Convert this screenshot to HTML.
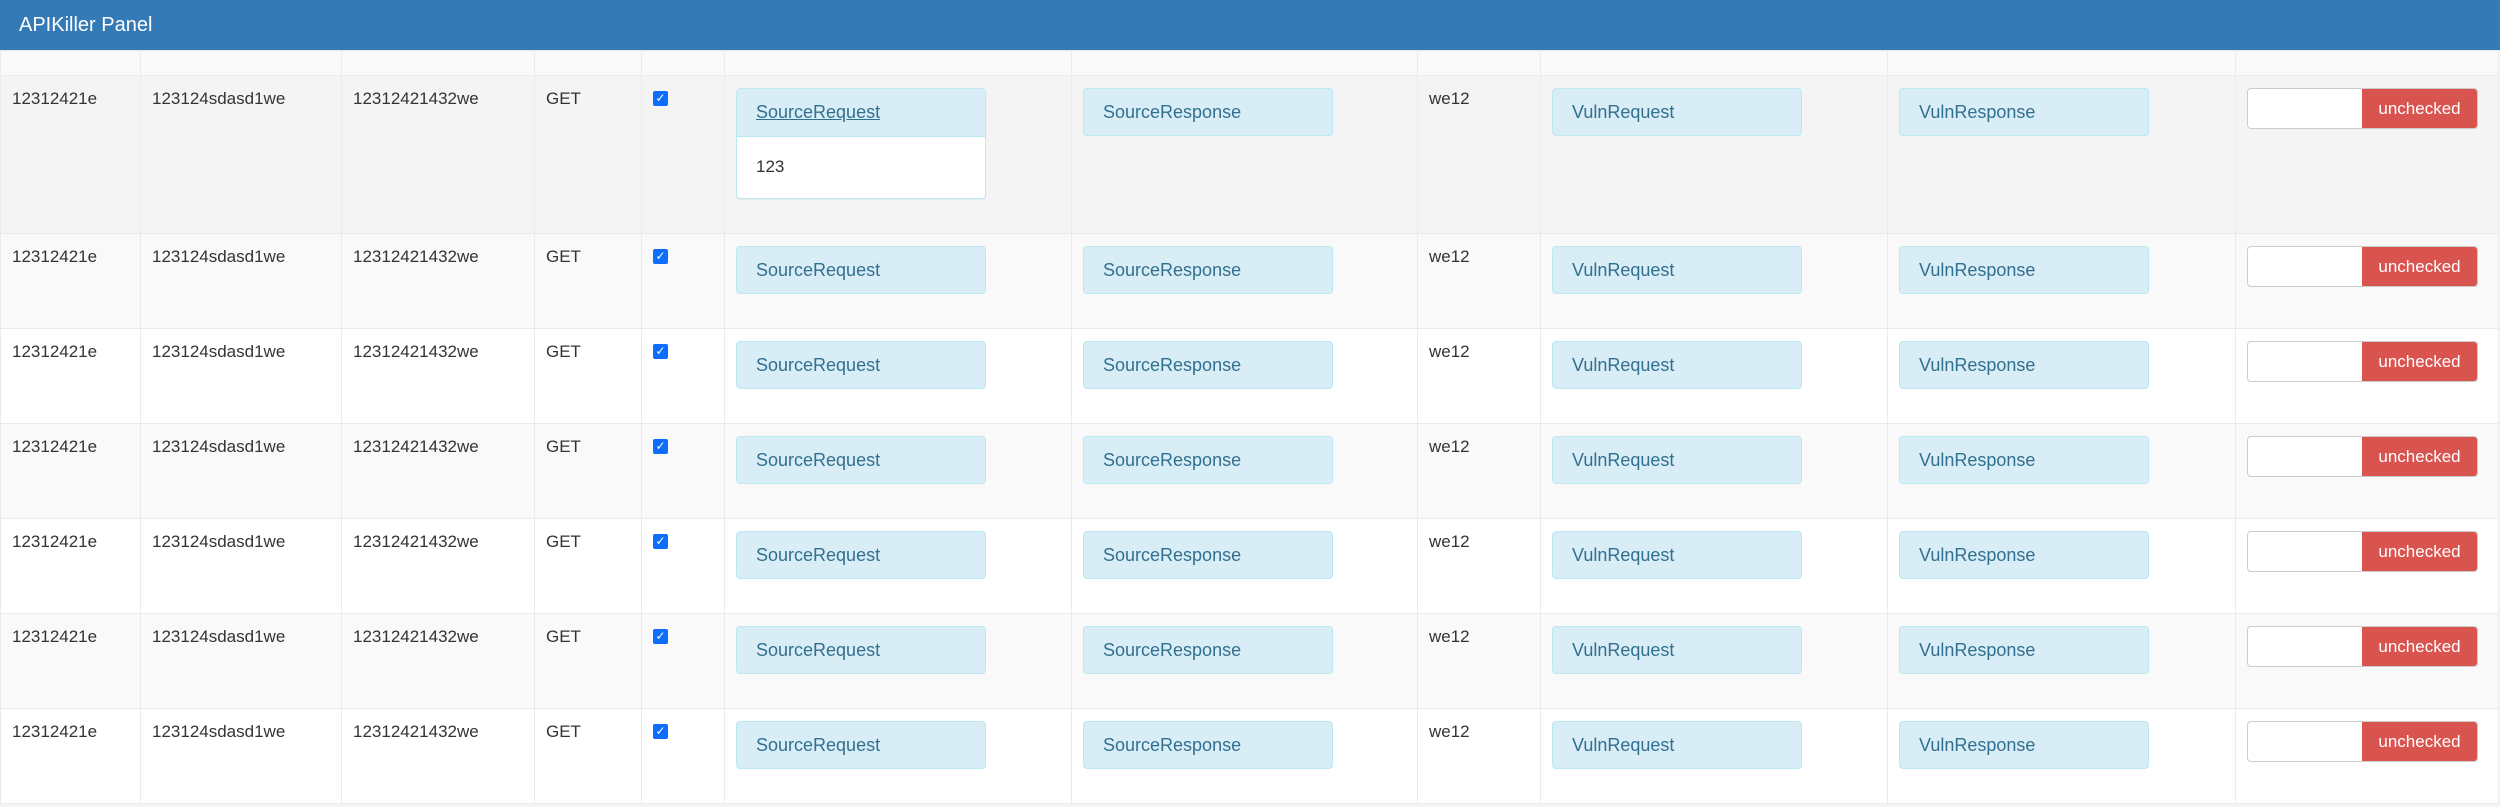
<!DOCTYPE html>
<html><head><meta charset="utf-8"><style>
*{box-sizing:border-box;margin:0;padding:0}
body{width:2500px;height:807px;overflow:hidden;background:#f5f5f5;font-family:"Liberation Sans",sans-serif;color:#333;font-size:17px}
.nav{height:50px;background:#337ab7;color:#fff;font-size:20px;line-height:50px;padding-left:19px}
table{border-collapse:collapse;table-layout:fixed;width:2498px;background:#fff}
td{border:1px solid #ebebeb;vertical-align:top;padding:13px 11px 0 11px;line-height:20px}
tr.h td{height:25px;background:#f9f9f9;padding:0}
tr.r td{height:95px}
tr.r1 td{height:158px;background:#f4f4f4}
tr.s td{background:#f9f9f9}
tr.w td{background:#fff}
td.b{padding-top:12px}
.btn{width:250px;height:48px;background:#d9edf7;border:1px solid #bce8f1;border-radius:4px;color:#31708f;line-height:46px;padding-left:19px;font-size:18px}
.pan{width:250px;border:1px solid #bce8f1;border-radius:4px;background:#fff;box-shadow:0 1px 1px rgba(0,0,0,.05)}
.pan .hd{height:48px;background:#d9edf7;border-bottom:1px solid #bce8f1;color:#31708f;line-height:46px;padding-left:19px;font-size:18px;text-decoration:underline}
.pan .bd{height:61px;line-height:60px;padding-left:19px;font-size:17px}
.cb{width:15px;height:15px;background:#0d6efd;border-radius:2px;margin-top:2px;color:#fff;font-size:12px;line-height:15px;text-align:center}
.tg{width:231px;height:41px;border:1px solid #ccc;border-radius:4px;background:#fff;position:relative;overflow:hidden}
.tg span{position:absolute;right:0;top:0;bottom:0;width:115px;background:#d9534f;color:#fff;text-align:center;line-height:39px;font-size:17px}
</style></head><body>
<div class="nav">APIKiller Panel</div>
<table>
<colgroup><col style="width:140px"><col style="width:201px"><col style="width:193px"><col style="width:107px"><col style="width:83px"><col style="width:347px"><col style="width:346px"><col style="width:123px"><col style="width:347px"><col style="width:348px"><col style="width:263px"></colgroup>
<tr class="h"><td></td><td></td><td></td><td></td><td></td><td></td><td></td><td></td><td></td><td></td><td></td></tr>
<tr class="r1"><td>12312421e</td><td>123124sdasd1we</td><td>12312421432we</td><td>GET</td><td><div class="cb">✓</div></td><td class="b"><div class="pan"><div class="hd">SourceRequest</div><div class="bd">123</div></div></td><td class="b"><div class="btn">SourceResponse</div></td><td>we12</td><td class="b"><div class="btn">VulnRequest</div></td><td class="b"><div class="btn">VulnResponse</div></td><td class="b"><div class="tg"><span>unchecked</span></div></td></tr>
<tr class="r s"><td>12312421e</td><td>123124sdasd1we</td><td>12312421432we</td><td>GET</td><td><div class="cb">✓</div></td><td class="b"><div class="btn">SourceRequest</div></td><td class="b"><div class="btn">SourceResponse</div></td><td>we12</td><td class="b"><div class="btn">VulnRequest</div></td><td class="b"><div class="btn">VulnResponse</div></td><td class="b"><div class="tg"><span>unchecked</span></div></td></tr>
<tr class="r w"><td>12312421e</td><td>123124sdasd1we</td><td>12312421432we</td><td>GET</td><td><div class="cb">✓</div></td><td class="b"><div class="btn">SourceRequest</div></td><td class="b"><div class="btn">SourceResponse</div></td><td>we12</td><td class="b"><div class="btn">VulnRequest</div></td><td class="b"><div class="btn">VulnResponse</div></td><td class="b"><div class="tg"><span>unchecked</span></div></td></tr>
<tr class="r s"><td>12312421e</td><td>123124sdasd1we</td><td>12312421432we</td><td>GET</td><td><div class="cb">✓</div></td><td class="b"><div class="btn">SourceRequest</div></td><td class="b"><div class="btn">SourceResponse</div></td><td>we12</td><td class="b"><div class="btn">VulnRequest</div></td><td class="b"><div class="btn">VulnResponse</div></td><td class="b"><div class="tg"><span>unchecked</span></div></td></tr>
<tr class="r w"><td>12312421e</td><td>123124sdasd1we</td><td>12312421432we</td><td>GET</td><td><div class="cb">✓</div></td><td class="b"><div class="btn">SourceRequest</div></td><td class="b"><div class="btn">SourceResponse</div></td><td>we12</td><td class="b"><div class="btn">VulnRequest</div></td><td class="b"><div class="btn">VulnResponse</div></td><td class="b"><div class="tg"><span>unchecked</span></div></td></tr>
<tr class="r s"><td>12312421e</td><td>123124sdasd1we</td><td>12312421432we</td><td>GET</td><td><div class="cb">✓</div></td><td class="b"><div class="btn">SourceRequest</div></td><td class="b"><div class="btn">SourceResponse</div></td><td>we12</td><td class="b"><div class="btn">VulnRequest</div></td><td class="b"><div class="btn">VulnResponse</div></td><td class="b"><div class="tg"><span>unchecked</span></div></td></tr>
<tr class="r w"><td>12312421e</td><td>123124sdasd1we</td><td>12312421432we</td><td>GET</td><td><div class="cb">✓</div></td><td class="b"><div class="btn">SourceRequest</div></td><td class="b"><div class="btn">SourceResponse</div></td><td>we12</td><td class="b"><div class="btn">VulnRequest</div></td><td class="b"><div class="btn">VulnResponse</div></td><td class="b"><div class="tg"><span>unchecked</span></div></td></tr>
</table>
</body></html>
